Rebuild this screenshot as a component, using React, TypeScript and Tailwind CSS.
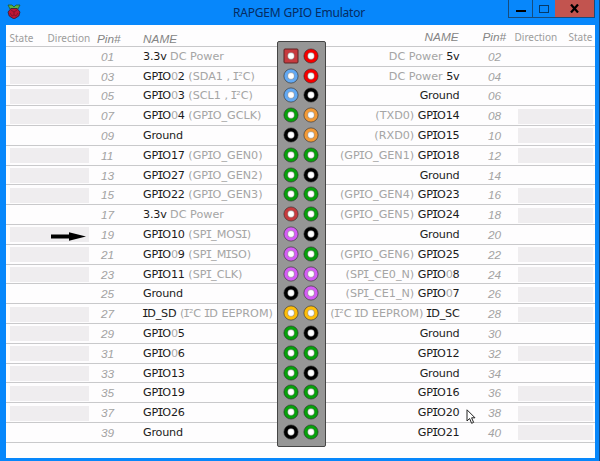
import React from "react";

type Pin = { n: string; name: string; note?: string; color: string; cell?: boolean; arrow?: boolean };

const RED = "#f50000", BLUE = "#62a9f3", BLACK = "#000000", GREEN = "#07a10b", ORANGE = "#f39a36";
const BRICK = "#c73a3e", PURPLE = "#d55cf5", YELLOW = "#fdbd09";

const left: Pin[] = [
  { n: "01", name: "3.3v", note: "DC Power", color: BRICK },
  { n: "03", name: "GPIO02", note: "(SDA1 , I²C)", color: BLUE, cell: true },
  { n: "05", name: "GPIO03", note: "(SCL1 , I²C)", color: BLUE, cell: true },
  { n: "07", name: "GPIO04", note: "(GPIO_GCLK)", color: GREEN, cell: true },
  { n: "09", name: "Ground", color: BLACK },
  { n: "11", name: "GPIO17", note: "(GPIO_GEN0)", color: GREEN, cell: true },
  { n: "13", name: "GPIO27", note: "(GPIO_GEN2)", color: GREEN, cell: true },
  { n: "15", name: "GPIO22", note: "(GPIO_GEN3)", color: GREEN, cell: true },
  { n: "17", name: "3.3v", note: "DC Power", color: BRICK },
  { n: "19", name: "GPIO10", note: "(SPI_MOSI)", color: PURPLE, cell: true, arrow: true },
  { n: "21", name: "GPIO09", note: "(SPI_MISO)", color: PURPLE, cell: true },
  { n: "23", name: "GPIO11", note: "(SPI_CLK)", color: PURPLE, cell: true },
  { n: "25", name: "Ground", color: BLACK },
  { n: "27", name: "ID_SD", note: "(I²C ID EEPROM)", color: YELLOW, cell: true },
  { n: "29", name: "GPIO05", color: GREEN, cell: true },
  { n: "31", name: "GPIO06", color: GREEN, cell: true },
  { n: "33", name: "GPIO13", color: GREEN, cell: true },
  { n: "35", name: "GPIO19", color: GREEN, cell: true },
  { n: "37", name: "GPIO26", color: GREEN, cell: true },
  { n: "39", name: "Ground", color: BLACK },
];

const right: Pin[] = [
  { n: "02", name: "5v", note: "DC Power", color: RED },
  { n: "04", name: "5v", note: "DC Power", color: RED },
  { n: "06", name: "Ground", color: BLACK },
  { n: "08", name: "GPIO14", note: "(TXD0)", color: ORANGE, cell: true },
  { n: "10", name: "GPIO15", note: "(RXD0)", color: ORANGE, cell: true },
  { n: "12", name: "GPIO18", note: "(GPIO_GEN1)", color: GREEN, cell: true },
  { n: "14", name: "Ground", color: BLACK },
  { n: "16", name: "GPIO23", note: "(GPIO_GEN4)", color: GREEN, cell: true },
  { n: "18", name: "GPIO24", note: "(GPIO_GEN5)", color: GREEN, cell: true },
  { n: "20", name: "Ground", color: BLACK },
  { n: "22", name: "GPIO25", note: "(GPIO_GEN6)", color: GREEN, cell: true },
  { n: "24", name: "GPIO08", note: "(SPI_CE0_N)", color: PURPLE, cell: true },
  { n: "26", name: "GPIO07", note: "(SPI_CE1_N)", color: PURPLE, cell: true },
  { n: "28", name: "ID_SC", note: "(I²C ID EEPROM)", color: YELLOW, cell: true },
  { n: "30", name: "Ground", color: BLACK },
  { n: "32", name: "GPIO12", color: GREEN, cell: true },
  { n: "34", name: "Ground", color: BLACK },
  { n: "36", name: "GPIO16", color: GREEN, cell: true },
  { n: "38", name: "GPIO20", color: GREEN, cell: true },
  { n: "40", name: "GPIO21", color: GREEN, cell: true },
];

// Capital I is set in the mono face, whose glyph has crossbars.
function Barred({ text }: { text: string }) {
  return (
    <>
      {text.split(/(I)/).map((part, i) =>
        part === "I" ? (
          <span key={i} className="-mx-[1.1px] font-['DejaVu_Sans_Mono',monospace]">I</span>
        ) : (
          part
        ),
      )}
    </>
  );
}

function Name({ text }: { text: string }) {
  const padded = /^GPIO0\d$/.test(text);
  return (
    <span className="tracking-[-0.22px] text-[#1c1c1c]">
      <Barred text={padded ? "GPIO" : text} />
      {padded && <span className="text-[#aaaaaa]">0</span>}
      {padded && text[5]}
    </span>
  );
}

const nameText = "whitespace-pre font-['DejaVu_Sans',sans-serif] text-[11.2px] leading-[20px] text-[#a5a5a5]";
const pinText = "font-['Liberation_Sans',sans-serif] text-[11.8px] leading-[20px] italic text-[#a3a3a3]";

function LeftRow({ pin }: { pin: Pin }) {
  return (
    <div className="flex h-[19.8px] border-b border-[#c9c9cb]">
      <div className={`mt-[2.5px] ml-1 flex h-[15px] w-[79px] justify-end ${pin.cell ? "bg-[#efedef]" : ""}`}>
        {pin.arrow && (
          <svg className="mt-[5px] mr-[3px]" width="35" height="9" viewBox="0 0 35 9">
            <path d="M0 2.6H18V.2L35 4.5 18 8.8V6.4H0Z" fill="#000" />
          </svg>
        )}
      </div>
      <div className={`ml-[12.5px] w-[42px] ${pinText}`}>{pin.n}</div>
      <div className={nameText}>
        <Name text={pin.name} />
        {pin.note && <> <Barred text={pin.note} /></>}
      </div>
    </div>
  );
}

function RightRow({ pin }: { pin: Pin }) {
  return (
    <div className="flex h-[19.8px] justify-end border-b border-[#c9c9cb]">
      <div className={nameText}>
        {pin.note && <><Barred text={pin.note} /> </>}
        <Name text={pin.name} />
      </div>
      <div className={`ml-[28.5px] w-[30px] ${pinText}`}>{pin.n}</div>
      <div className={`mt-[2.5px] mr-[1.5px] h-[15px] w-[75px] ${pin.cell ? "bg-[#efedef]" : ""}`} />
    </div>
  );
}

function Socket({ color, square }: { color: string; square?: boolean }) {
  return (
    <svg width="16" height="16" viewBox="0 0 16 16">
      {square ? (
        <rect x="1" y="1" width="14" height="14" rx="1" fill={color} stroke="#5a2525" strokeWidth="1" />
      ) : (
        <circle cx="8" cy="8" r="7.1" fill={color} stroke="#252525" strokeOpacity=".7" strokeWidth=".8" />
      )}
      <circle cx="8" cy="8" r="3.4" fill="#fff" stroke="#252525" strokeOpacity=".5" strokeWidth=".6" />
    </svg>
  );
}

export default function App() {
  return (
    <div className="relative flex h-[461px] w-[600px] flex-col overflow-hidden border-r border-[#124a86] bg-[#0787fb]">
      <header className="flex h-[25px] shrink-0 items-start">
        <svg className="mt-[4px] ml-[7px]" width="14" height="15" viewBox="0 0 14 15">
          <path d="M1 1 5 1 7 3 9 1 13 1 11 5 7 6 3 5Z" fill="#55b545" stroke="#234b25" strokeWidth=".7" />
          <path d="M4 4.5h6l3 3.5-1.2 4L7 15l-4.8-3L1 8Z" fill="#c01636" stroke="#361a30" strokeWidth=".8" />
          <path d="m4 6 3 2 3-2M7 8v3M3 9l2 3M11 9l-2 3M5 12l2-1 2 1" fill="none" stroke="#631126" strokeWidth=".6" />
        </svg>
        <h1 className="ml-[212px] w-[134px] whitespace-nowrap font-['Noto_Sans',sans-serif] text-[12px] leading-[26px] tracking-[-0.2px] text-[#062c62]">RAPGEM GPIO Emulator</h1>
        <div className="ml-auto mr-[4px] flex h-[18px] border-x border-b border-[#164c7d]">
          <button className="flex w-6 items-end justify-center border-r border-[#164c7d] pb-[5px]"><span className="h-[2px] w-[10px] bg-black" /></button>
          <button className="flex w-[22px] items-center justify-center"><span className="h-[8px] w-[10px] border-[1.5px] border-[#063a68]" /></button>
          <button className="flex w-[39px] items-center justify-center bg-[#c2544f]">
            <svg width="9" height="9" viewBox="0 0 9 9"><path d="M1 .5 8 8.5M8 .5 1 8.5" stroke="#000" strokeWidth="2.2" /></svg>
          </button>
        </div>
      </header>
      <main className="ml-[5.5px] flex h-[432.5px] w-[589px] bg-[#fefdfe]">
        <section className="w-[271px]">
          <div className="flex h-[21.8px] border-b border-[#c9c9cb] text-[#9c9c9c]">
            <span className="ml-1 w-[38px] font-['Noto_Sans',sans-serif] text-[10px] leading-[26px]">State</span>
            <span className="w-[49.5px] font-['Noto_Sans',sans-serif] text-[10px] leading-[26px]">Direction</span>
            <span className="w-[46px] font-['Liberation_Sans',sans-serif] text-[11.8px] leading-[29px] italic text-[#858585]">Pin#</span>
            <span className="font-['Liberation_Sans',sans-serif] text-[11.8px] leading-[29px] italic text-[#858585]">NAME</span>
          </div>
          {left.map((p) => <LeftRow key={p.n} pin={p} />)}
        </section>
        <div className="mt-[16px] grid h-[405.5px] w-[49px] auto-rows-[19.8px] grid-cols-[20px_20px] content-start justify-center rounded-[2px] border-[1.5px] border-[#454545] bg-[#969696] pt-[4px]">
          {left.map((p, i) => (
            <React.Fragment key={p.n}>
              <div className="flex items-center justify-center"><Socket color={p.color} square={i === 0} /></div>
              <div className="flex items-center justify-center"><Socket color={right[i].color} /></div>
            </React.Fragment>
          ))}
        </div>
        <section className="w-[269px]">
          <div className="flex h-[21.8px] justify-end border-b border-[#c9c9cb] text-[#9c9c9c]">
            <span className="w-[58px] font-['Liberation_Sans',sans-serif] text-[11.8px] leading-[25px] italic text-[#858585]">NAME</span>
            <span className="w-[32px] font-['Liberation_Sans',sans-serif] text-[11.8px] leading-[25px] italic text-[#858585]">Pin#</span>
            <span className="w-[54px] font-['Noto_Sans',sans-serif] text-[10px] leading-[24px]">Direction</span>
            <span className="w-[26px] font-['Noto_Sans',sans-serif] text-[10px] leading-[24px]">State</span>
          </div>
          {right.map((p) => <RightRow key={p.n} pin={p} />)}
        </section>
      </main>
      <svg className="absolute top-[409px] left-[466px]" width="10" height="16" viewBox="0 0 10 16">
        <path d="M1 .8V12l2.6-2.5 2 4.8 2-.9-2-4.6H9Z" fill="#fff" stroke="#222" strokeWidth="1" />
      </svg>
    </div>
  );
}
